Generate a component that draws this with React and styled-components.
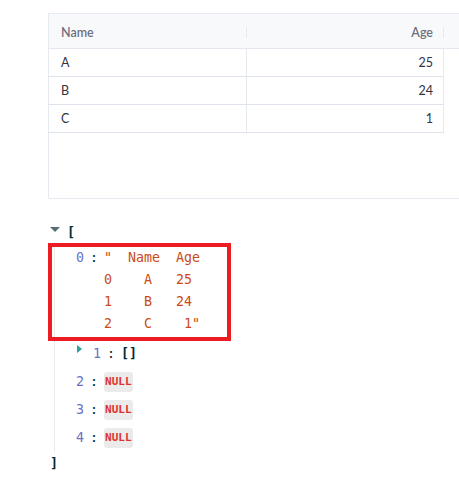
import styled, { createGlobalStyle } from 'styled-components';

const GlobalStyle = createGlobalStyle`
    html, body {
        margin: 0;
        background: #ffffff;
        overflow: hidden;
    }
`;

const Page = styled.div`
    display: flex;
    flex-direction: column;
    gap: 24px;
    padding: 13px 0 0 48px;
`;

// ---- data grid ----

const Grid = styled.div`
    display: flex;
    flex-direction: column;
    height: 186px;
    border: 1px solid #e6e9ef;
    border-right: none;
    box-sizing: border-box;
    font-family: Lato, "Open Sans", sans-serif;
    font-size: 12.5px;
`;

const HeaderRow = styled.div`
    display: flex;
    align-items: center;
    height: 35px;
    padding-top: 2px;
    box-sizing: border-box;
    background-color: #f8f9fb;
    border-bottom: 1px solid #e4e7ee;
`;

const HeadCell = styled.div`
    width: ${({ $width }) => $width}px;
    box-sizing: border-box;
    padding: 0 ${({ $align }) => ($align === 'right' ? '10px' : '0')} 0 ${({ $align }) => ($align === 'right' ? '0' : '12px')};
    text-align: ${({ $align }) => $align};
    color: #6e717b;
    font-weight: 600;
`;

const HeadSep = styled.div`
    width: 1px;
    height: 11px;
    background-color: #e8e9ec;
`;

const Row = styled.div`
    display: flex;
    width: 395px;
    height: 28px;
    box-sizing: border-box;
    border-bottom: 1px solid #dfe3ec;
`;

const Cell = styled.div`
    display: flex;
    align-items: center;
    justify-content: ${({ $align }) => ($align === 'right' ? 'flex-end' : 'flex-start')};
    width: ${({ $width }) => $width}px;
    box-sizing: border-box;
    padding: 0 ${({ $align }) => ($align === 'right' ? '10px' : '0')} 0 ${({ $align }) => ($align === 'right' ? '0' : '12px')};
    border-right: 1px solid #e6e9ef;
    color: #31333f;
`;

// ---- json viewer ----

const Json = styled.div`
    font-family: "DejaVu Sans Mono", "Liberation Mono", monospace;
    font-size: 13.3px;
    color: #002b36;
`;

const RootLine = styled.div`
    display: flex;
    align-items: flex-start;
    height: 20px;
    line-height: 20px;
    padding-left: 2px;
`;

const ArrowDown = styled.span`
    width: 0;
    height: 0;
    margin: 4px 7px 0 0;
    border-left: 5px solid transparent;
    border-right: 5px solid transparent;
    border-top: 5px solid #586e75;
`;

const ArrowRight = styled.span`
    width: 0;
    height: 0;
    margin: 1px 11px 0 1px;
    align-self: flex-start;
    border-top: 4px solid transparent;
    border-bottom: 4px solid transparent;
    border-left: 5px solid #2aa198;
`;

const Brace = styled.span`
    font-weight: bold;
    color: #002b36;
`;

const List = styled.div`
    margin-left: 6px;
    border-left: 1px solid #ebebeb;
`;

const Entry = styled.div`
    position: relative;
    display: flex;
    align-items: ${({ $top }) => ($top ? 'baseline' : 'center')};
    padding: 4px 0 ${({ $top }) => ($top ? '5px' : '4px')} 21px;
    line-height: 20px;
`;

const Key = styled.span`
    color: #6c71c4;
`;

const Colon = styled.span`
    margin: 0 6px;
    color: #002b36;
`;

const StringValue = styled.span`
    display: inline-block;
    white-space: pre;
    line-height: 22px;
    color: #cb4b16;
`;

const NullBadge = styled.span`
    display: inline-block;
    height: 20px;
    line-height: 20px;
    padding: 0 1px;
    border-radius: 3px;
    background-color: #ebebeb;
    color: #dc322f;
    font-size: 11px;
    font-weight: bold;
`;

const Highlight = styled.div`
    position: absolute;
    left: -7px;
    top: 0;
    bottom: -1px;
    width: 183px;
    box-sizing: border-box;
    border: 4px solid #ed1c24;
    pointer-events: none;
`;

const CloseLine = styled.div`
    height: 24px;
    line-height: 24px;
    padding-left: 2px;
`;

const people = [
    { name: 'A', age: 25 },
    { name: 'B', age: 24 },
    { name: 'C', age: 1 },
];

const frameText = '"  Name  Age\n0    A   25\n1    B   24\n2    C    1"';

function App() {
    return (
        <>
            <GlobalStyle />
            <Page>
                <Grid>
                    <HeaderRow>
                        <HeadCell $width={197} $align="left">Name</HeadCell>
                        <HeadSep />
                        <HeadCell $width={196} $align="right">Age</HeadCell>
                        <HeadSep />
                    </HeaderRow>
                    {people.map(({ name, age }) => (
                        <Row key={name}>
                            <Cell $width={198} $align="left">{name}</Cell>
                            <Cell $width={197} $align="right">{age}</Cell>
                        </Row>
                    ))}
                </Grid>

                <Json>
                    <RootLine>
                        <ArrowDown />
                        <Brace>[</Brace>
                    </RootLine>
                    <List>
                        <Entry $top>
                            <Key>0</Key>
                            <Colon>:</Colon>
                            <StringValue>{frameText}</StringValue>
                            <Highlight />
                        </Entry>
                        <Entry>
                            <ArrowRight />
                            <Key>1</Key>
                            <Colon>:</Colon>
                            <Brace>[]</Brace>
                        </Entry>
                        {[2, 3, 4].map((i) => (
                            <Entry key={i}>
                                <Key>{i}</Key>
                                <Colon>:</Colon>
                                <NullBadge>NULL</NullBadge>
                            </Entry>
                        ))}
                    </List>
                    <CloseLine>
                        <Brace>]</Brace>
                    </CloseLine>
                </Json>
            </Page>
        </>
    );
}

export default App;
